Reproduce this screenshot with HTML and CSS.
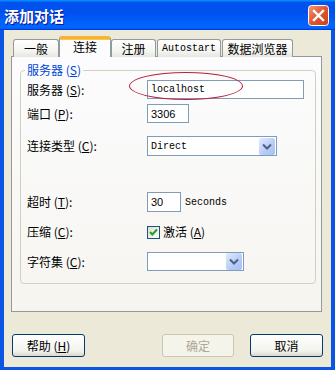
FILE: index.html
```html
<!DOCTYPE html>
<html lang="zh">
<head>
    <meta charset="UTF-8">
    <title>添加对话</title>
    <link rel="stylesheet" href="styles.css">
</head>
<body>
    <div class="window">
        <div class="titlebar">
            <span class="title">添加对话</span>
            <span class="close">
                <svg width="21" height="21" viewBox="0 0 21 21">
                    <defs>
                        <linearGradient id="cg" x1="0" y1="0" x2="1" y2="1">
                            <stop offset="0" stop-color="#f29a7c"/>
                            <stop offset="0.5" stop-color="#e0552f"/>
                            <stop offset="1" stop-color="#c8401c"/>
                        </linearGradient>
                    </defs>
                    <rect x="0.5" y="0.5" width="20" height="20" rx="3" fill="url(#cg)" stroke="#fff"/>
                    <path d="M6 6 L15 15 M15 6 L6 15" stroke="#fff" stroke-width="2.4" stroke-linecap="square"/>
                </svg>
            </span>
        </div>

        <div class="client">
            <div class="tabs">
                <div class="tab tab-general">一般</div>
                <div class="tab tab-active">连接</div>
                <div class="tab tab-reg">注册</div>
                <div class="tab tab-auto mono">Autostart</div>
                <div class="tab tab-browse">数据浏览器</div>
            </div>

            <div class="panel">
                <fieldset class="group">
                    <legend>服务器 (<u>S</u>)</legend>

                    <div class="row row-server">
                        <label class="label">服务器 (<u>S</u>):</label>
                        <div class="field field-host mono">localhost</div>
                    </div>
                    <div class="row row-port">
                        <label class="label">端口 (<u>P</u>):</label>
                        <div class="field field-port num">3306</div>
                    </div>
                    <div class="row row-type">
                        <label class="label">连接类型 (<u>C</u>):</label>
                        <div class="select select-type">
                            <span class="select-text mono">Direct</span>
                            <span class="select-btn">
                                <svg width="16" height="17" viewBox="0 0 16 17">
                                    <path d="M4 6.5 L8 10.5 L12 6.5" fill="none" stroke="#4d6185" stroke-width="2"/>
                                </svg>
                            </span>
                        </div>
                    </div>
                    <div class="row row-timeout">
                        <label class="label">超时 (<u>T</u>):</label>
                        <div class="field field-timeout num">30</div>
                        <span class="unit mono">Seconds</span>
                    </div>
                    <div class="row row-compress">
                        <label class="label">压缩 (<u>C</u>):</label>
                        <span class="checkbox">
                            <svg width="11" height="11" viewBox="0 0 11 11">
                                <path d="M2 5 L4.3 7.5 L9 2.5" fill="none" stroke="#21a121" stroke-width="2"/>
                            </svg>
                        </span>
                        <span class="check-label">激活 (<u>A</u>)</span>
                    </div>
                    <div class="row row-charset">
                        <label class="label">字符集 (<u>C</u>):</label>
                        <div class="select select-charset">
                            <span class="select-text"></span>
                            <span class="select-btn">
                                <svg width="16" height="17" viewBox="0 0 16 17">
                                    <path d="M4 6.5 L8 10.5 L12 6.5" fill="none" stroke="#4d6185" stroke-width="2"/>
                                </svg>
                            </span>
                        </div>
                    </div>
                </fieldset>
            </div>

            <div class="buttons">
                <button class="btn btn-help">帮助 (<u>H</u>)</button>
                <button class="btn btn-ok" disabled>确定</button>
                <button class="btn btn-cancel">取消</button>
            </div>
        </div>

        <!-- red marker round the host name -->
        <div class="mark"></div>
    </div>
</body>
</html>
```

FILE: styles.css
```css
body {
    margin: 0;
    font-family: "Noto Sans CJK SC", "DejaVu Sans", sans-serif;
    font-size: 12px;
    color: #000;
    background: #ece9d8;
}

.window {
    position: relative;
    width: 335px;
    height: 370px;
    background: #0a55e3;
    display: flex;
    flex-direction: column;
}

.titlebar {
    height: 30px;
    flex: none;
    display: flex;
    align-items: center;
    justify-content: space-between;
    padding: 0 6px 0 4px;
    box-sizing: border-box;
    background: linear-gradient(180deg, #0997ff, #0053ee 8%, #0050ee 40%, #06f 88%, #06f 93%, #005bff 95%, #003dd7 96%, #003dd7);
}

.title {
    color: #fff;
    font-weight: bold;
    font-size: 15px;
    line-height: 17px;
    text-shadow: 1px 1px #0f1089;
}

.close {
    display: flex;
    margin-top: 1px;
}

.client {
    flex: 1;
    margin: 0 4px 3px 4px;
    padding: 6px 9px 0 7px;
    background: #ece9d8;
    display: flex;
    flex-direction: column;
}

.mono {
    font-family: "Liberation Mono", "DejaVu Sans Mono", monospace;
    font-size: 10px;
}

.num {
    font-family: "Liberation Sans", Arial, sans-serif;
    font-size: 11px;
}

/* tabs */
.tabs {
    display: flex;
    align-items: flex-end;
    height: 21px;
    padding-left: 2px;
    margin-bottom: -1px;
    position: relative;
    z-index: 1;
}

.tab {
    height: 18px;
    box-sizing: border-box;
    border: 1px solid #919b9c;
    border-bottom: none;
    border-radius: 3px 3px 0 0;
    background: linear-gradient(#ffffff, #f3f3ef 70%, #e7e6e0);
    display: flex;
    align-items: center;
    justify-content: center;
    line-height: 14px;
    padding-top: 1px;
}

.tab-general { width: 46px; }
.tab-reg { width: 45px; }
.tab-auto { width: 64px; margin-left: 1px; }
.tab-browse { width: 71px; margin-left: 1px; }

.tab-active {
    width: 52px;
    height: 21px;
    background: #fcfcfe;
    border-top: 3px solid #f6b33c;
    box-shadow: inset 0 1px #ffc83c;
    padding-top: 0;
    padding-bottom: 2px;
}

.panel {
    height: 256px;
    box-sizing: border-box;
    border: 1px solid #919b9c;
    background: linear-gradient(#fcfcfe, #f6f5f0);
    padding: 6px 5px 0 8px;
}

.group {
    margin: 0;
    padding: 3px 0 12px 6px;
    border: 1px solid #d0d0bf;
    border-radius: 4px;
}

.group legend {
    color: #0046d5;
    padding: 0 2px;
    margin-left: -2px;
    line-height: 14px;
}

.row {
    display: flex;
    align-items: center;
}

.label {
    width: 120px;
    flex: none;
    line-height: 14px;
}

.row-server { height: 19px; }
.row-port { height: 19px; margin-top: 5px; }
.row-type { height: 20px; margin-top: 13px; }
.row-timeout { height: 20px; margin-top: 36px; }
.row-compress { height: 20px; margin-top: 10px; }
.row-charset { height: 19px; margin-top: 10px; }

.field {
    box-sizing: border-box;
    height: 100%;
    border: 1px solid #7f9db9;
    background: #fff;
    padding-left: 3px;
    display: flex;
    align-items: center;
}

.field-host { width: 157px; }
.field-port { width: 42px; }
.field-timeout { width: 34px; }

.unit {
    margin-left: 4px;
}

.select {
    box-sizing: border-box;
    height: 100%;
    border: 1px solid #7f9db9;
    background: #fff;
    display: flex;
    align-items: center;
    justify-content: space-between;
    padding: 0 1px 0 3px;
}

.select-type { width: 130px; }
.select-charset { width: 97px; }

.select-btn {
    display: flex;
    width: 16px;
    height: 17px;
    border-radius: 2px;
    background: linear-gradient(135deg, #e2ebfd, #b6cbf6 60%, #a8bff3);
}

.checkbox {
    box-sizing: border-box;
    width: 13px;
    height: 13px;
    border: 1px solid #1c5180;
    background: linear-gradient(135deg, #dcdcd7, #ffffff);
    display: flex;
    align-items: center;
    justify-content: center;
}

.check-label {
    margin-left: 3px;
    line-height: 14px;
}

/* bottom buttons */
.buttons {
    display: flex;
    margin: 22px -1px 0 1px;
    gap: 16px;
}

.btn {
    height: 23px;
    width: 73px;
    box-sizing: border-box;
    border: 1px solid #003c74;
    border-radius: 3px;
    background: linear-gradient(#ffffff, #f3f3ee 75%, #dcd7cb);
    font-family: "Noto Sans CJK SC", sans-serif;
    font-size: 12px;
    line-height: 14px;
    padding: 0;
    color: #000;
}

.btn-help {
    margin-right: auto;
}

.btn-ok {
    width: 72px;
    border-color: #c9c7ba;
    background: #f5f4ea;
    color: #aca899;
}

.mark {
    position: absolute;
    left: 129px;
    top: 72px;
    width: 114px;
    height: 28px;
    box-sizing: border-box;
    border: 1px solid #b7203c;
    border-radius: 50%;
}
```
